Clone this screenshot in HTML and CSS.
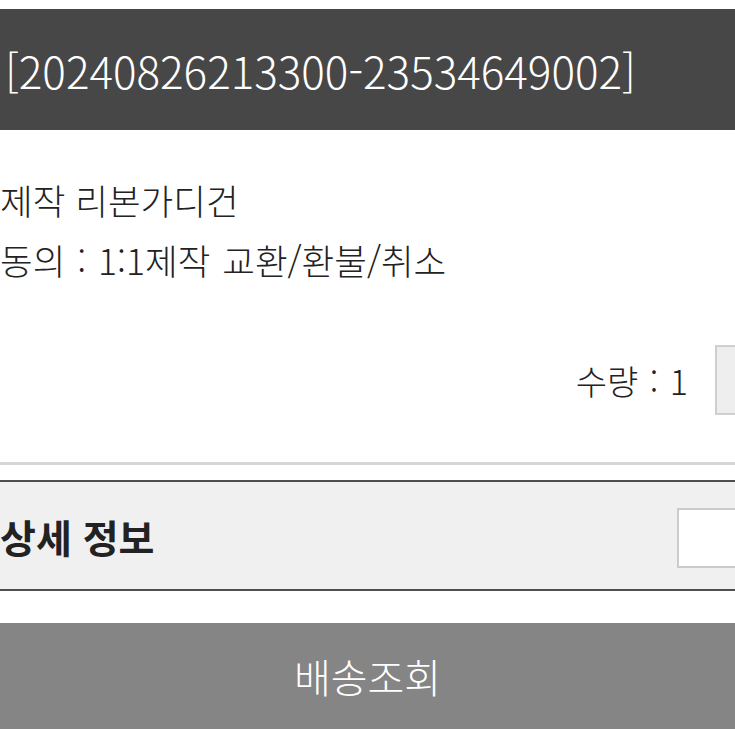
FILE: index.html
```html
<!DOCTYPE html>
<html lang="ko">
<head>
    <meta charset="UTF-8">
    <meta name="viewport" content="width=device-width, initial-scale=1.0">
    <title>주문 상세</title>
    <link rel="stylesheet" href="styles.css">
</head>
<body>
    <div id="order">
        <!-- Order number -->
        <div class="order-head">[20240826213300-23534649002]</div>

        <!-- Item -->
        <div class="item">
            <div class="item-name">제작 리본가디건</div>
            <div class="item-option">동의 : 1:1제작 교환/환불/취소</div>
            <div class="item-qty">
                <span>수량 : 1</span>
                <span class="qty-box"></span>
            </div>
        </div>

        <div class="divider"></div>

        <!-- Detail toggle -->
        <div class="detail">
            <span class="detail-title">상세 정보</span>
            <span class="detail-btn"></span>
        </div>

        <button class="track-btn">배송조회</button>
    </div>
</body>
</html>
```

FILE: styles.css
```css
/* Body */
body {
    margin: 0;
    padding: 0;
    background: #fff;
    color: #222;
    font-family: "Noto Sans CJK KR", "Noto Sans", sans-serif;
    font-weight: 300;
    overflow: hidden;
}

#order {
    padding-top: 9px;
}

/* Order number bar */
.order-head {
    height: 121px;
    background: #474747;
    color: #fff;
    font-size: 44px;
    padding-left: 5px;
    display: flex;
    align-items: center;
}

/* Item */
.item {
    padding-top: 40px;
}

.item-name,
.item-option {
    font-size: 35.5px;
    line-height: 60px;
    color: #222;
    white-space: nowrap;
}

.item-option {
    word-spacing: 2px;
}

.item-qty {
    display: flex;
    justify-content: flex-end;
    align-items: center;
    gap: 27px;
    margin-top: 55px;
    font-size: 34px;
    word-spacing: 2px;
    color: #222;
}

.qty-box {
    width: 18px;
    height: 66px;
    border: 2px solid #cfcfcf;
    border-right: none;
    background: #eee;
}

.divider {
    height: 3px;
    background: #d6d6d6;
    margin-top: 47px;
}

/* Detail */
.detail {
    margin-top: 15px;
    height: 107px;
    border-top: 2px solid #4f4f4f;
    border-bottom: 2px solid #4f4f4f;
    background: #f0f0f0;
    display: flex;
    align-items: center;
    justify-content: space-between;
}

.detail-title {
    font-size: 39px;
    font-weight: bold;
    color: #222;
}

.detail-btn {
    width: 56px;
    height: 56px;
    margin-top: 4px;
    border: 2px solid #cbcbcb;
    border-right: none;
    background: #fff;
}

/* Tracking button */
.track-btn {
    display: block;
    width: 100%;
    height: 106px;
    margin-top: 32px;
    border: none;
    background: #858585;
    color: #fff;
    font-family: inherit;
    font-weight: 300;
    font-size: 40px;
}
```
